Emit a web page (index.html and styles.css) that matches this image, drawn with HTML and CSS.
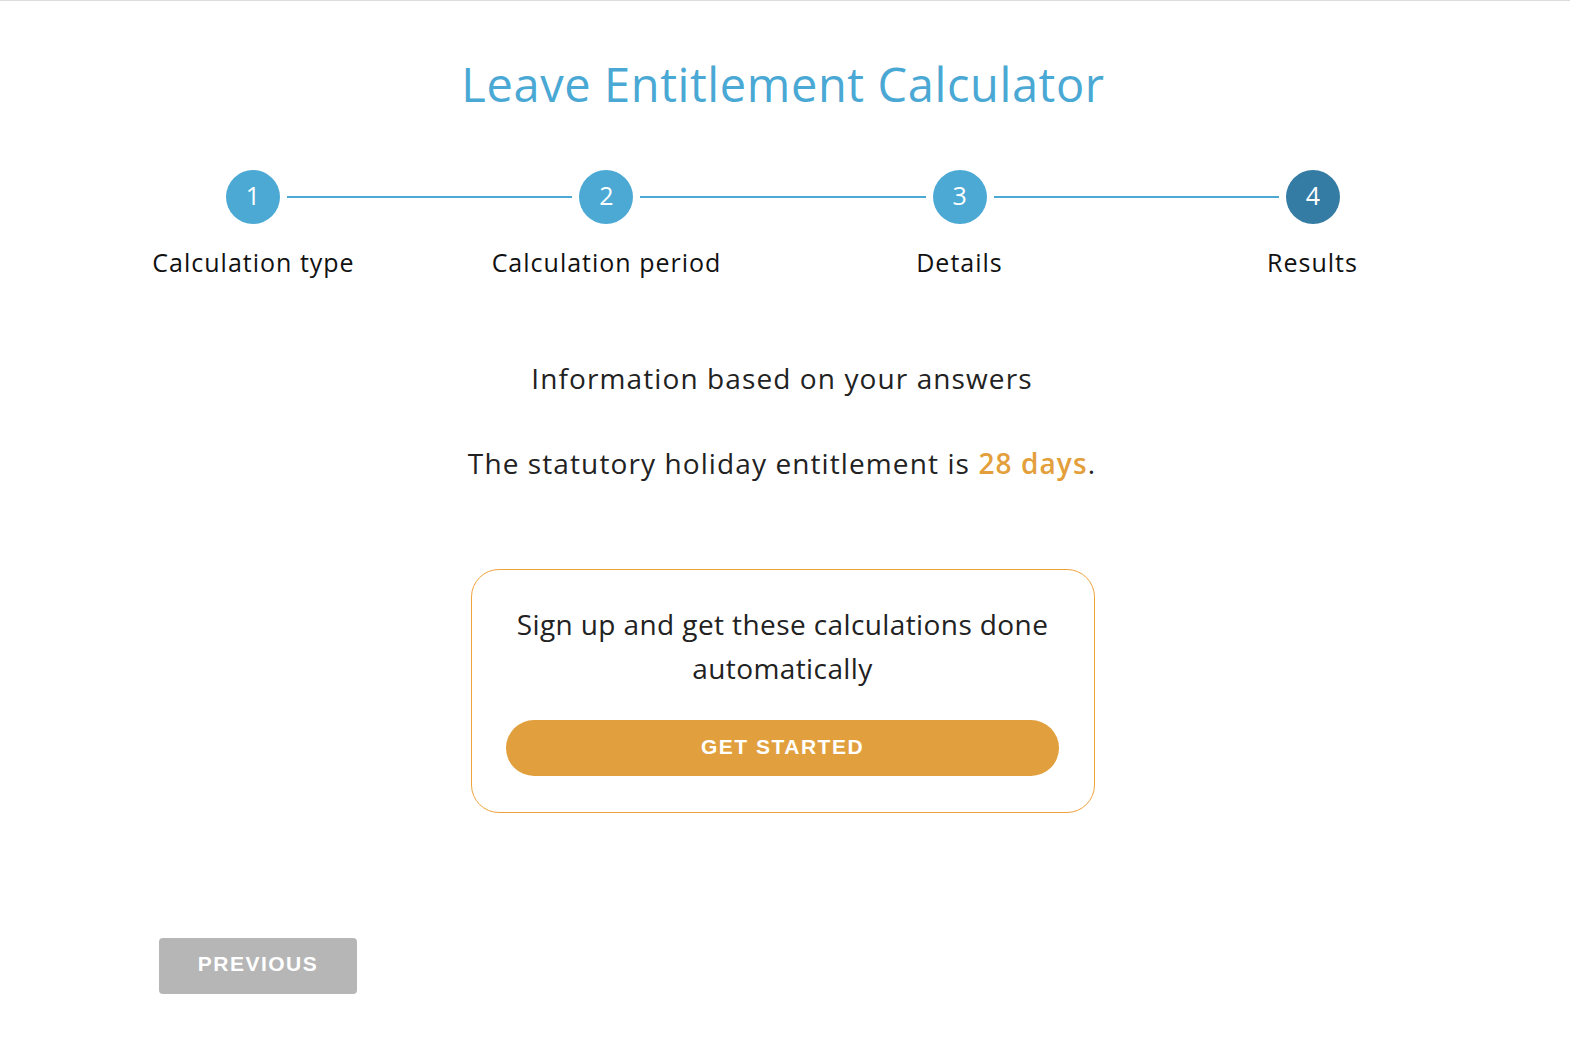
FILE: index.html
```html
<!DOCTYPE html>
<html>

<head>
  <meta charset="utf-8">
  <title>Leave Entitlement Calculator</title>
  <link rel="stylesheet" href="styles.css">
</head>

<body>
  <div class="calc">
    <h1 class="calc-title">Leave Entitlement Calculator</h1>

    <div class="steps">
      <div class="steps-track">
        <span class="dot">1</span>
        <span class="bar"></span>
        <span class="dot">2</span>
        <span class="bar"></span>
        <span class="dot">3</span>
        <span class="bar"></span>
        <span class="dot curr">4</span>
      </div>
      <div class="steps-labels">
        <span>Calculation type</span>
        <span>Calculation period</span>
        <span>Details</span>
        <span>Results</span>
      </div>
    </div>

    <div class="result">
      <p class="result-info">Information based on your answers</p>
      <p class="result-days">The statutory holiday entitlement is <b>28 days</b>.</p>
    </div>

    <div class="signup">
      <p>Sign up and get these calculations done automatically</p>
      <a class="btn-start" href="#">GET STARTED</a>
    </div>

    <div class="nav">
      <a class="btn-prev" href="#">PREVIOUS</a>
    </div>
  </div>
</body>

</html>
```

FILE: styles.css
```css
* {
  margin: 0;
  padding: 0;
  box-sizing: border-box;
}

body {
  border-top: 1px solid #dcdcdc;
  font-family: "Open Sans", "DejaVu Sans", sans-serif;
  color: #222;
  background: #fff;
}

a {
  text-decoration: none;
}

.calc {
  width: 1412px;
  margin-left: 77px;
}

.calc-title {
  margin-top: 53px;
  font-size: 47px;
  line-height: 60px;
  font-weight: 400;
  letter-spacing: 0.6px;
  color: #4aa8d4;
  text-align: center;
}

.steps {
  margin-top: 56px;
}

.steps-track {
  display: flex;
  align-items: center;
  padding: 0 149px;
}

.steps-track .dot {
  flex: none;
  width: 54px;
  height: 54px;
  border-radius: 50%;
  background: #4ca9d4;
  color: #fff;
  font-size: 25px;
  line-height: 50px;
  text-align: center;
}

.steps-track .dot.curr {
  background: #357ca5;
}

.steps-track .bar {
  flex: 1;
  height: 2px;
  margin: 0 7px;
  background: #4ca9d4;
}

.steps-labels {
  display: grid;
  grid-template-columns: repeat(4, 353px);
  margin-top: 23px;
}

.steps-labels span {
  font-size: 25px;
  line-height: 30px;
  letter-spacing: 1px;
  text-align: center;
  color: #111;
}

.result {
  margin-top: 81px;
  margin-left: -2px;
  text-align: center;
}

.result-info,
.result-days {
  font-size: 28px;
  line-height: 40px;
  letter-spacing: 1.1px;
}

.result-days {
  margin-top: 45px;
}

.result-days b {
  color: #e39f3b;
  font-weight: 600;
}

.signup {
  width: 624px;
  margin: 86px auto 0;
  padding: 32px 35px 36px 34px;
  border: 1.5px solid #f0a23c;
  border-radius: 28px;
  text-align: center;
}

.signup p {
  font-size: 28px;
  line-height: 44px;
  letter-spacing: 0.4px;
}

.btn-start {
  display: block;
  height: 56px;
  margin-top: 30px;
  border-radius: 28px;
  background: #e1a03d;
  color: #fff;
  font-family: "Liberation Sans", Arial, sans-serif;
  font-size: 21px;
  font-weight: 700;
  letter-spacing: 1.5px;
  line-height: 54px;
}

.nav {
  margin-top: 125px;
  padding-left: 82px;
}

.btn-prev {
  display: inline-block;
  width: 198px;
  height: 56px;
  border-radius: 4px;
  background: #b6b6b6;
  color: #fff;
  font-family: "Liberation Sans", Arial, sans-serif;
  font-size: 21px;
  font-weight: 700;
  letter-spacing: 1.5px;
  line-height: 51px;
  text-align: center;
}
```
